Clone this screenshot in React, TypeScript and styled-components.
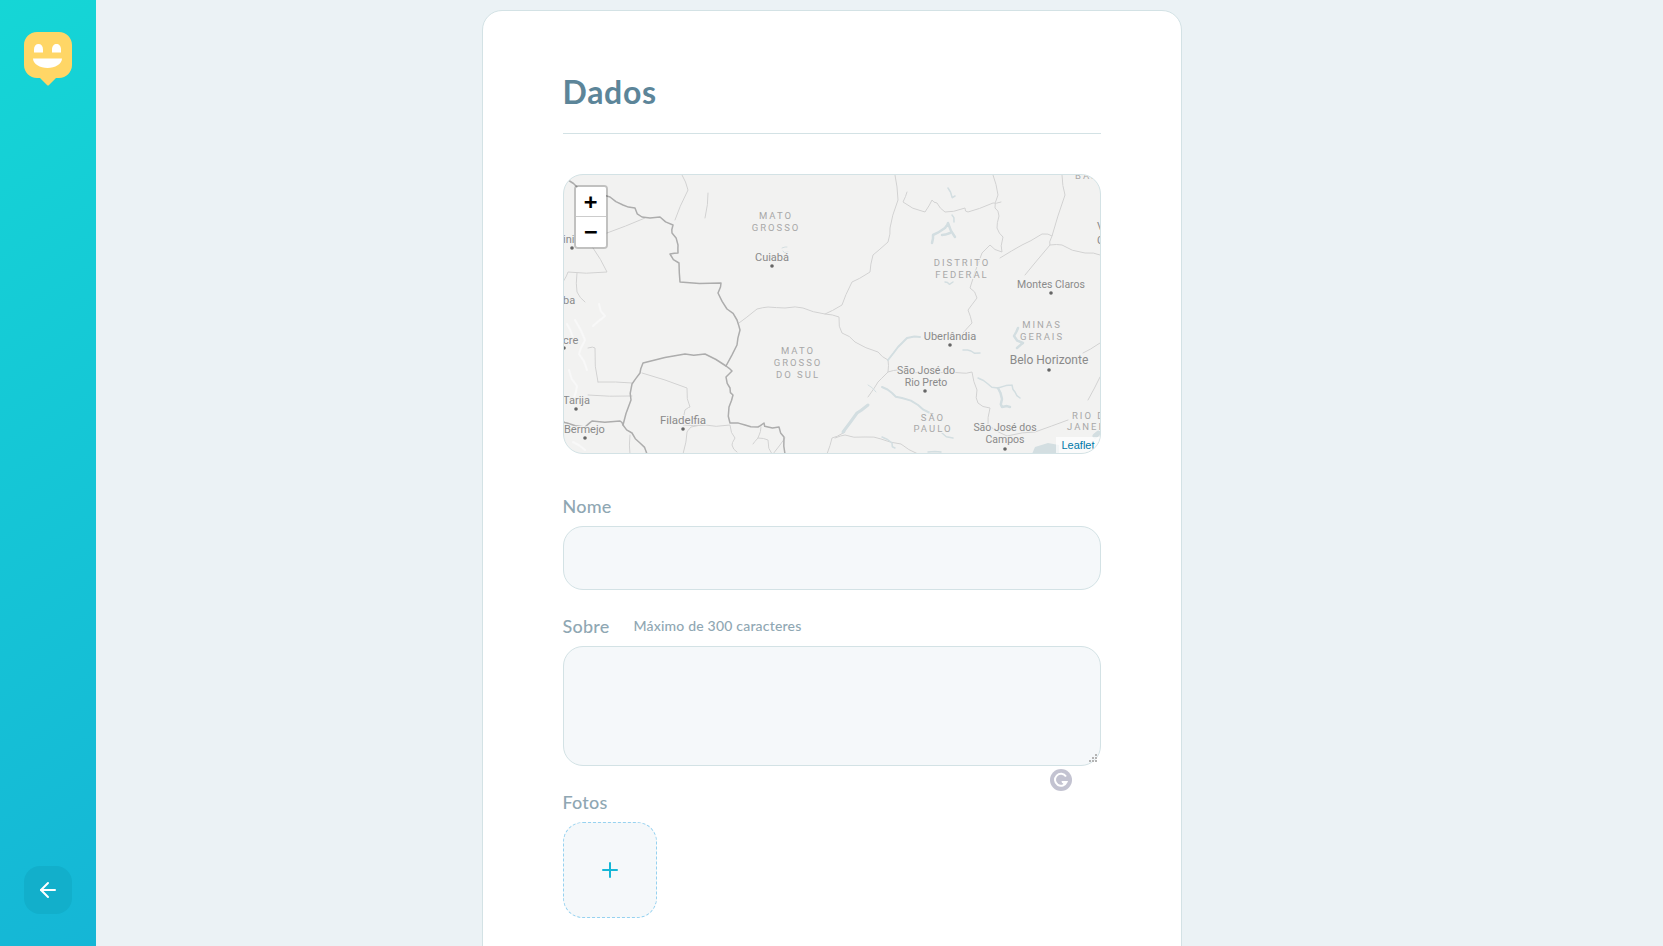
import React from "react";
import styled, { createGlobalStyle } from "styled-components";
import { FiArrowLeft, FiPlus } from "react-icons/fi";

const GlobalStyle = createGlobalStyle`
  * {
    margin: 0;
    padding: 0;
    box-sizing: border-box;
  }

  html, body, #root {
    height: 100%;
    overflow: hidden;
  }

  body {
    background: #ebf2f5;
    color: #5c8599;
    font-family: Lato, "Open Sans", sans-serif;
  }
`;

const Page = styled.div`
  display: flex;
  height: 100vh;
`;

const Sidebar = styled.aside`
  display: flex;
  flex: 0 0 96px;
  flex-direction: column;
  justify-content: space-between;
  align-items: center;
  height: 100%;
  padding: 32px 24px;
  background: linear-gradient(329.54deg, #15b6d6 0%, #15d6d6 100%);
`;

const BackButton = styled.button`
  display: flex;
  justify-content: center;
  align-items: center;
  width: 48px;
  height: 48px;
  border: 0;
  border-radius: 16px;
  background: #12afcb;
  color: #fff;
  cursor: pointer;
`;

const Main = styled.main`
  flex: 1;
  padding-top: 10px;
  padding-right: 96px;
`;

const Form = styled.form`
  width: 700px;
  margin: 0 auto;
  padding: 64px 80px;
  min-height: 1100px;
  background: #fff;
  border: 1px solid #d3e2e5;
  border-radius: 20px;
`;

const Legend = styled.h1`
  margin-bottom: 40px;
  padding-bottom: 24px;
  border-bottom: 1px solid #d3e2e5;
  color: #5c8599;
  font-size: 32px;
  font-weight: 700;
  letter-spacing: 0.7px;
  line-height: 34px;
`;

const MapBox = styled.div`
  position: relative;
  height: 280px;
  margin-bottom: 40px;
  overflow: hidden;
  background: #f2f2f1;
  border: 1px solid #d3e2e5;
  border-radius: 20px;

  svg {
    display: block;
  }
`;

const ZoomControl = styled.div`
  position: absolute;
  top: 10px;
  left: 10px;
  width: 34px;
  border: 2px solid rgba(0, 0, 0, 0.2);
  border-radius: 4px;
  background-clip: padding-box;
`;

const ZoomButton = styled.a`
  display: block;
  width: 30px;
  height: 30px;
  background: #fff;
  color: #000;
  font: bold 22px/30px "DejaVu Sans Mono", monospace;
  text-align: center;

  &:first-child {
    border-bottom: 1px solid #ccc;
    border-radius: 2px 2px 0 0;
  }

  &:last-child {
    border-radius: 0 0 2px 2px;
  }
`;

const Attribution = styled.div`
  position: absolute;
  right: 0;
  bottom: 0;
  padding: 0 5px;
  background: rgba(255, 255, 255, 0.7);
  color: #0078a8;
  font: 11px/16px "Liberation Sans", sans-serif;
`;

const Field = styled.div`
  position: relative;

  & + & {
    margin-top: 24px;
  }
`;

const Label = styled.label`
  display: flex;
  align-items: center;
  margin-bottom: 8px;
  color: #8fa7b3;
  font-size: 18px;
  font-weight: 500;
  letter-spacing: 0.2px;
  line-height: 24px;
`;

const Hint = styled.span`
  margin-left: 24px;
  font-size: 14px;
`;

const TextInput = styled.input`
  display: block;
  width: 100%;
  height: 64px;
  padding: 0 16px;
  background: #f5f8fa;
  border: 1px solid #d3e2e5;
  border-radius: 20px;
  outline: none;
  color: #5c8599;
`;

const TextArea = styled.textarea`
  display: block;
  width: 100%;
  height: 120px;
  padding: 16px;
  background: #f5f8fa;
  border: 1px solid #d3e2e5;
  border-radius: 20px;
  outline: none;
  resize: none;
  color: #5c8599;
`;

const ResizeGrip = styled.span`
  position: absolute;
  right: 4px;
  bottom: 4px;
  width: 2px;
  height: 2px;
  background: #b4b4b4;
  box-shadow:
    -3px 0 #b4b4b4,
    -6px 0 #b4b4b4,
    0 -3px #b4b4b4,
    -3px -3px #b4b4b4,
    0 -6px #b4b4b4;
`;

const GrammarBadge = styled.div`
  position: absolute;
  right: 29px;
  bottom: -25px;
  width: 22px;
  height: 22px;
`;

const AddPhoto = styled.button`
  display: flex;
  justify-content: center;
  align-items: center;
  width: 94px;
  height: 96px;
  background: #f5f8fa;
  border: 1px dashed #96d2f0;
  border-radius: 20px;
  color: #15b6d6;
  cursor: pointer;
`;

const thickLines = [
  "M5 6 L15 14 L30 20 L47 23 L60 31 L72 34 L79 43 L97 43 L110 51 L109 59 L115 71 L115 79 L107 80 L116 89 L117 108 L158 109 L155 119 L164 135 L174 146 L177 156 L174 171 L163 192 L169 197 L163 203 L167 214 L170 221 L166 233 L167 249 L182 251 L195 253 L201 249 L205 253 L216 253 L221 263 L222 280",
  "M163 192 L142 180 L122 180 L80 189 L77 199 L69 210 L68 226 L60 251 L69 259 L77 269 L84 280",
  "M60 251 L57 247 L29 247 L22 253 L4 249 L0 247",
];

const thinLines = [
  "M79 199 L124 214 L127 233 L122 236 L120 251 L142 251 L167 251 L172 264 L169 271 L174 278",
  "M142 251 L128 253 L124 258 L120 280",
  "M35 208 L69 209 M35 208 L32 174 L25 174 M25 221 L69 222 M67 261 L67 280",
  "M195 264 L205 266 L209 280 M198 253 L195 264 L190 270",
  "M264 280 L269 264 L282 258",
  "M119 1 L125 16 L112 46 M145 19 L142 44 M44 59 L82 44",
  "M30 74 L44 98 L5 98 L0 108 M14 99 L14 118 L22 128",
  "M332 1 L335 26 L327 54 L325 68 L310 81 L307 98 L289 108 L279 131 L262 140 L240 134 L222 134 L205 133 L194 135 L176 149",
  "M344 18 L340 28 L362 38 L369 26 L374 29 L382 38 L402 34 L405 38 L430 29 L438 28",
  "M430 1 L435 21 L432 34 L436 42 L434 54 L440 63 L439 78 L427 71 L419 79 L407 114 L414 124 L405 136 L409 149 L400 159",
  "M437 84 L459 71 L479 60 L489 62 L502 21 L499 1 M489 62 L487 71 L462 101",
  "M487 71 L499 71 L522 79 L537 81",
  "M262 140 L276 143 L279 159 L292 168 L315 178 L325 186",
  "M325 186 L325 198 L315 208 L305 223",
  "M272 264 L282 261 L302 263 L318 265 L338 270 L355 280",
  "M325 198 L335 196 L372 199 L399 199 L409 198 L414 216 L415 229 L427 234 L425 251 L444 262 L472 258 L505 246",
  "M525 226 L537 203 M520 179 L537 169 M210 280 L222 264",
];

const riverLines = [
  { d: "M280 258 L294 239 L305 231", w: 3 },
  { d: "M325 186 L335 173 L344 164 L357 163", w: 2 },
  { d: "M319 213 L329 219 L339 224 L355 231 L367 239", w: 2 },
  { d: "M400 176 L408 177 L417 179", w: 1.5 },
  { d: "M415 204 L425 210 L435 214 L449 211 M449 211 L452 218 L457 224", w: 1.5 },
  { d: "M435 214 L439 225 L439 233 L447 233", w: 2.5 },
  { d: "M455 154 L451 162 L460 169 L454 174", w: 2.5 },
  { d: "M369 69 L370 61 L382 54 L385 49 L392 63 M387 59 L379 61", w: 2.5 },
  { d: "M385 14 L389 23 L392 22 M389 41 L391 48", w: 1.5 },
  { d: "M382 108 L386 110 L390 108", w: 1.5 },
  { d: "M219 74 L224 73 M220 77 L225 78", w: 1 },
  { d: "M319 263 L329 269 L332 274", w: 1.5 },
  { d: "M365 278 L378 278 M379 259 L390 264", w: 1.5 },
  { d: "M305 211 L313 218", w: 1 },
  { d: "M532 262 L537 258", w: 5 },
];

const terrainLines = [
  "M12 146 L22 166 L16 180 L24 196",
  "M4 150 L10 164 M6 196 L14 212 L10 226",
  "M10 268 L22 276 M36 130 L42 142 L30 152",
];

const places = [
  { text: "Cuiabá", x: 209, y: 87, size: 11, dot: [209, 92] },
  { text: "ini", x: 0, y: 69, size: 11, anchor: "start", dot: [9, 74] },
  { text: "ba", x: 0, y: 130, size: 11, anchor: "start" },
  { text: "Montes Claros", x: 488, y: 114, size: 10.5, dot: [488, 119] },
  { text: "V", x: 534, y: 56, size: 11, anchor: "start" },
  { text: "C", x: 534, y: 70, size: 11, anchor: "start" },
  { text: "cre", x: 0, y: 170, size: 11, anchor: "start", dot: [1, 174] },
  { text: "Tarija", x: 0, y: 230, size: 11, anchor: "start", dot: [13, 235] },
  { text: "Bermejo", x: 1, y: 259, size: 11, anchor: "start", dot: [22, 264] },
  { text: "Filadelfia", x: 120, y: 250, size: 11.5, dot: [120, 255] },
  { text: "Uberlândia", x: 387, y: 166, size: 11, dot: [387, 171] },
  { text: "Belo Horizonte", x: 486, y: 190, size: 12, dot: [486, 196] },
  { text: "São José do", x: 363, y: 200, size: 10.5 },
  { text: "Rio Preto", x: 363, y: 212, size: 10.5, dot: [362, 217] },
  { text: "São José dos", x: 442, y: 257, size: 10.5 },
  { text: "Campos", x: 442, y: 269, size: 10.5, dot: [442, 275] },
];

const regions = [
  { text: "MATO", x: 213, y: 45 },
  { text: "GROSSO", x: 213, y: 57 },
  { text: "DISTRITO", x: 399, y: 92 },
  { text: "FEDERAL", x: 399, y: 104 },
  { text: "MATO", x: 235, y: 180 },
  { text: "GROSSO", x: 235, y: 192 },
  { text: "DO SUL", x: 235, y: 204 },
  { text: "MINAS", x: 479, y: 154 },
  { text: "GERAIS", x: 479, y: 166 },
  { text: "SÃO", x: 370, y: 247 },
  { text: "PAULO", x: 370, y: 258 },
  { text: "BAH", x: 512, y: 5, anchor: "start" },
  { text: "RIO D", x: 509, y: 245, anchor: "start" },
  { text: "JANEI", x: 504, y: 256, anchor: "start" },
];

// adds a small kink to every segment so the borders don't look ruler drawn
function roughen(d: string) {
  let seed = 7;
  let last: number[] | null = null;
  return d.replace(/([ML])(-?[\d.]+) (-?[\d.]+)/g, (_, cmd, xs, ys) => {
    const x = Number(xs);
    const y = Number(ys);
    let out = `${cmd}${x} ${y}`;
    if (cmd === "L" && last) {
      seed = (seed * 37 + 11) % 101;
      const off = (seed / 100 - 0.5) * 2.6;
      const mx = (last[0] + x) / 2 + off;
      const my = (last[1] + y) / 2 - off;
      out = `L${mx.toFixed(1)} ${my.toFixed(1)} ${out}`;
    }
    last = [x, y];
    return out;
  });
}

const MapLabel = styled.text<{ $size: number }>`
  fill: #8a8a8a;
  font-family: Roboto, sans-serif;
  font-size: ${(p) => p.$size}px;
  paint-order: stroke;
  stroke: #f2f2f1;
  stroke-width: 2px;
`;

const RegionLabel = styled.text`
  fill: #a8a8a8;
  font-family: Roboto, sans-serif;
  font-size: 9.5px;
  letter-spacing: 2px;
  paint-order: stroke;
  stroke: #f2f2f1;
  stroke-width: 2px;
`;

function MapDrawing() {
  return (
    <svg width="536" height="278" viewBox="1 1 536 278">
      <filter id="soft">
        <feGaussianBlur stdDeviation="0.3" />
      </filter>
      <g fill="none" strokeLinejoin="round" strokeLinecap="round" filter="url(#soft)">
        {terrainLines.map((d) => (
          <path key={d} d={roughen(d)} stroke="#f8f8f8" strokeWidth="2" />
        ))}
        {thinLines.map((d) => (
          <path key={d} d={roughen(d)} stroke="#d2d2d2" strokeWidth="1" />
        ))}
        {riverLines.map((r) => (
          <path key={r.d} d={roughen(r.d)} stroke="#d3dee1" strokeWidth={r.w} />
        ))}
        {thickLines.map((d) => (
          <path key={d} d={roughen(d)} stroke="#adadad" strokeWidth="1.5" />
        ))}
      </g>
      <path d="M469 280 L472 273 L485 269 L496 271 L496 280 Z" fill="#d3dee1" />
      {places.map((p) => (
        <React.Fragment key={p.text}>
          <MapLabel $size={p.size} x={p.x} y={p.y} textAnchor={p.anchor ?? "middle"}>
            {p.text}
          </MapLabel>
          {p.dot && <circle cx={p.dot[0]} cy={p.dot[1]} r="1.8" fill="#666" />}
        </React.Fragment>
      ))}
      {regions.map((r) => (
        <RegionLabel key={r.text + r.x} x={r.x} y={r.y} textAnchor={r.anchor ?? "middle"}>
          {r.text}
        </RegionLabel>
      ))}
    </svg>
  );
}

function Logo() {
  return (
    <svg width="48" height="54" viewBox="0 0 48 54">
      <path
        d="M13 0H35C42.2 0 48 5.8 48 13V33C48 40.2 42.2 46 35 46H32L25 53Q24 54 23 53L16 46H13C5.8 46 0 40.2 0 33V13C0 5.8 5.8 0 13 0Z"
        fill="#ffd666"
      />
      <path d="M10 17.5C10 14 11.8 12 14.5 12C17.2 12 19 14 19 17.5V20.5H10Z" fill="#fff" />
      <path d="M28 17.5C28 14 30 12 32.5 12C35 12 37 14 37 17.5V20.5H28Z" fill="#fff" />
      <path d="M9 26.5H38C38 32 31 36 23.5 36C16 36 9 32 9 26.5Z" fill="#fff" />
    </svg>
  );
}

function GrammarIcon() {
  return (
    <svg width="22" height="22" viewBox="0 0 22 22">
      <circle cx="11" cy="11" r="11" fill="#c3c3d1" />
      <path d="M16 7.5A6 6 0 1 0 16.6 13H12" fill="none" stroke="#fff" strokeWidth="2" />
      <path d="M11 12.5H17L14.5 16Z" fill="#fff" />
    </svg>
  );
}

export default function App() {
  return (
    <Page>
      <GlobalStyle />
      <Sidebar>
        <Logo />
        <BackButton type="button">
          <FiArrowLeft size={24} />
        </BackButton>
      </Sidebar>
      <Main>
        <Form>
          <Legend>Dados</Legend>
          <MapBox>
            <MapDrawing />
            <ZoomControl>
              <ZoomButton>+</ZoomButton>
              <ZoomButton>−</ZoomButton>
            </ZoomControl>
            <Attribution>Leaflet</Attribution>
          </MapBox>
          <Field>
            <Label htmlFor="name">Nome</Label>
            <TextInput id="name" />
          </Field>
          <Field>
            <Label htmlFor="about">
              Sobre<Hint>Máximo de 300 caracteres</Hint>
            </Label>
            <TextArea id="about" />
            <ResizeGrip />
            <GrammarBadge>
              <GrammarIcon />
            </GrammarBadge>
          </Field>
          <Field>
            <Label>Fotos</Label>
            <AddPhoto type="button">
              <FiPlus size={24} />
            </AddPhoto>
          </Field>
        </Form>
      </Main>
    </Page>
  );
}
